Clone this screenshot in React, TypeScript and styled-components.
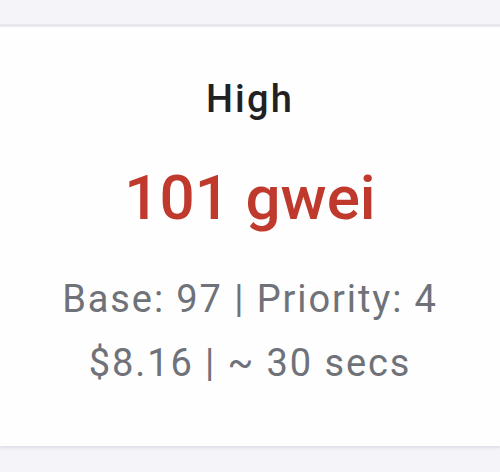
import React from 'react';
import styled, { createGlobalStyle } from 'styled-components';

const GlobalStyle = createGlobalStyle`
  html, body {
    margin: 0;
    padding: 0;
    background: #f5f4f9;
    font-family: Roboto, "Liberation Sans", sans-serif;
  }
`;

const Page = styled.div`
  padding-top: 24px;
  min-height: 472px;
  box-sizing: border-box;
`;

const Card = styled.div`
  background: #fefefe;
  border-top: 3px solid #e9e8ee;
  box-shadow: 0 2px 3px rgba(60, 60, 90, 0.12);
  display: flex;
  flex-direction: column;
  align-items: center;
  padding: 53px 0 51px;
  text-align: center;
`;

const Title = styled.div`
  font-size: 38px;
  line-height: 38px;
  font-weight: 500;
  letter-spacing: 2.2px;
  color: #212124;
`;

const Price = styled.div<{ $color: string }>`
  margin-top: 49px;
  font-size: 62px;
  line-height: 62px;
  font-weight: 500;
  color: ${(p) => p.$color};
`;

const Info = styled.div`
  margin-top: 38px;
  font-size: 38px;
  line-height: 64px;
  letter-spacing: 1.9px;
  color: #6f7278;
`;

const App: React.FC = () => {
  return (
    <Page>
      <GlobalStyle />
      <Card>
        <Title>High</Title>
        <Price $color="#bf3a2d">101 gwei</Price>
        <Info>
          <div>Base: 97 | Priority: 4</div>
          <div>$8.16 | ~ 30 secs</div>
        </Info>
      </Card>
    </Page>
  );
};

export default App;
